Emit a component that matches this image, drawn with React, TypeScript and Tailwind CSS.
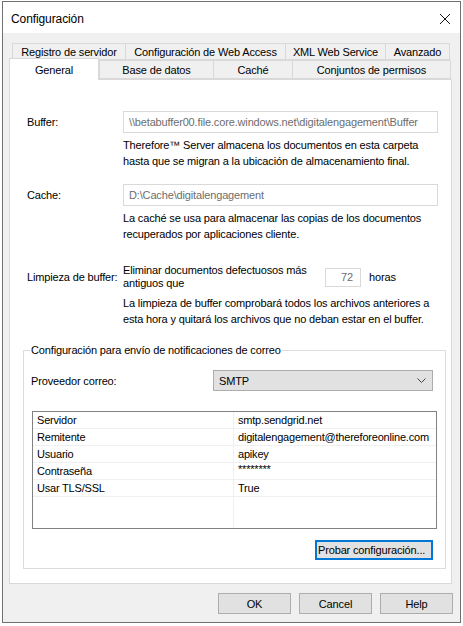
import React from "react";

const font = { fontFamily: '"Liberation Sans", Arial, sans-serif' };

function Tab({ w, label, selected }: { w: string; label: string; selected?: boolean }) {
  return (
    <div
      className={
        selected
          ? `${w} shrink-0 relative z-10 -mt-[3px] h-[22px] -mb-px border border-b-0 border-[#d9d9d9] bg-white flex items-start justify-center pt-[3px] whitespace-nowrap`
          : `${w} shrink-0 h-full border border-[#d9d9d9] -ml-px first:ml-0 bg-[#f0f0f0] flex items-center justify-center whitespace-nowrap`
      }
    >
      {label}
    </div>
  );
}

export default function App() {
  const rows: [string, string][] = [
    ["Servidor", "smtp.sendgrid.net"],
    ["Remitente", "digitalengagement@thereforeonline.com"],
    ["Usuario", "apikey"],
    ["Contraseña", "********"],
    ["Usar TLS/SSL", "True"],
  ];
  return (
    <div
      className="w-[463px] h-[626px] bg-white pt-px pl-[2px] text-[11px] leading-[16px] tracking-[-0.15px] text-black whitespace-nowrap"
      style={font}
    >
      <div className="w-[459px] h-[622px] border border-[#707070] flex flex-col">
        {/* Title bar */}
        <div className="h-[31px] bg-white flex items-center justify-between pl-[8px] pr-[9px] shrink-0">
          <span className="text-[12px] tracking-[-0.1px] pt-[2px]">Configuración</span>
          <svg width="12" height="12" viewBox="0 0 12 12" className="mt-[2px]">
            <path d="M1 1 L11 11 M11 1 L1 11" stroke="#111" strokeWidth="1" />
          </svg>
        </div>
        {/* Body */}
        <div className="flex-1 bg-[#f0f0f0] flex flex-col pt-[10px] pl-[6px] pr-[7px]">
          {/* Tabs */}
          <div className="flex flex-col">
            <div className="flex h-[17px] ml-[3px]">
              <Tab w="w-[114px]" label="Registro de servidor" />
              <Tab w="w-[161px]" label="Configuración de Web Access" />
              <Tab w="w-[101px]" label="XML Web Service" />
              <Tab w="w-[65px]" label="Avanzado" />
            </div>
            <div className="flex h-[19px] items-end">
              <Tab w="w-[90px]" label="General" selected />
              <div className="flex h-[19px]">
                <Tab w="w-[115px]" label="Base de datos" />
                <Tab w="w-[80px]" label="Caché" />
                <Tab w="w-[159px]" label="Conjuntos de permisos" />
              </div>
            </div>
          </div>
          {/* Panel */}
          <div className="w-[443px] h-[505px] bg-white border border-[#d9d9d9] flex flex-col pl-[17px]">
            {/* Buffer */}
            <div className="flex items-center mt-[31px]">
              <div className="w-[96px] shrink-0">Buffer:</div>
              <div className="w-[315px] shrink-0 h-[22px] border border-[#d9d9d9] flex items-center pl-[5px] text-[#6d6d6d] overflow-hidden">
                \\betabuffer00.file.core.windows.net\digitalengagement\Buffer
              </div>
            </div>
            <div className="ml-[96px] mt-[4px]">
              <div>Therefore™ Server almacena los documentos en esta carpeta</div>
              <div>hasta que se migran a la ubicación de almacenamiento final.</div>
            </div>
            {/* Cache */}
            <div className="flex items-center mt-[15px]">
              <div className="w-[96px] shrink-0">Cache:</div>
              <div className="w-[315px] shrink-0 h-[22px] border border-[#d9d9d9] flex items-center pl-[5px] text-[#6d6d6d]">
                D:\Cache\digitalengagement
              </div>
            </div>
            <div className="ml-[96px] mt-[4px]">
              <div>La caché se usa para almacenar las copias de los documentos</div>
              <div>recuperados por aplicaciones cliente.</div>
            </div>
            {/* Limpieza */}
            <div className="flex items-center mt-[22px]">
              <div className="w-[96px] shrink-0">Limpieza de buffer:</div>
              <div className="w-[202px] shrink-0 leading-[13px]">
                <div>Eliminar documentos defectuosos más</div>
                <div>antiguos que</div>
              </div>
              <div className="w-[36px] shrink-0 h-[19px] border border-[#d9d9d9] flex items-center justify-end pr-[7px] text-[#6d6d6d]">
                72
              </div>
              <div className="ml-[8px]">horas</div>
            </div>
            <div className="ml-[96px] mt-[5px]">
              <div>La limpieza de buffer comprobará todos los archivos anteriores a</div>
              <div>esta hora y quitará los archivos que no deban estar en el buffer.</div>
            </div>
            {/* Group box */}
            <div className="relative ml-[-4px] mt-[23px] w-[423px] h-[219px] border border-[#dcdcdc] flex flex-col pl-[8px] pr-[9px]">
              <div className="absolute -top-[9px] left-[6px] bg-white px-px">
                Configuración para envío de notificaciones de correo
              </div>
              <div className="flex items-center justify-between mt-[19px]">
                <div className="-ml-px">Proveedor correo:</div>
                <div className="w-[220px] h-[21px] bg-[#e1e1e1] border border-[#adadad] flex items-center justify-between pl-[5px] pr-[6px] mr-[3px]">
                  <span>SMTP</span>
                  <svg width="9" height="5" viewBox="0 0 9 5">
                    <path d="M0.5 0.5 L4.5 4.5 L8.5 0.5" fill="none" stroke="#444" strokeWidth="1" />
                  </svg>
                </div>
              </div>
              {/* Table */}
              <div className="mt-[20px] w-[405px] h-[118px] border border-[#828282] flex flex-col tracking-[-0.2px]">
                {rows.map(([k, v]) => (
                  <div key={k} className="flex h-[17px] border-b border-[#f0f0f0] shrink-0">
                    <div className="w-[201px] shrink-0 pl-[4px] border-r border-[#f0f0f0] leading-[17px]">{k}</div>
                    <div className={`flex-1 pl-[4px] ${k === "Contraseña" ? "leading-[12px]" : "leading-[17px]"}`}>{v}</div>
                  </div>
                ))}
                <div className="flex flex-1">
                  <div className="w-[201px] shrink-0 border-r border-[#f0f0f0]" />
                </div>
              </div>
              <div className="flex justify-end mt-[11px] mr-[3px]">
                <div className="w-[118px] h-[20px] bg-[#e1e1e1] border-2 border-[#0078d7] flex items-center pl-[1px]">
                  Probar configuración...
                </div>
              </div>
            </div>
          </div>
          {/* Footer buttons */}
          <div className="flex justify-end gap-[8px] mt-[9px]">
            {["OK", "Cancel", "Help"].map((b) => (
              <div
                key={b}
                className="w-[73px] h-[21px] bg-[#e1e1e1] border border-[#adadad] flex items-center justify-center"
              >
                {b}
              </div>
            ))}
          </div>
        </div>
      </div>
    </div>
  );
}
